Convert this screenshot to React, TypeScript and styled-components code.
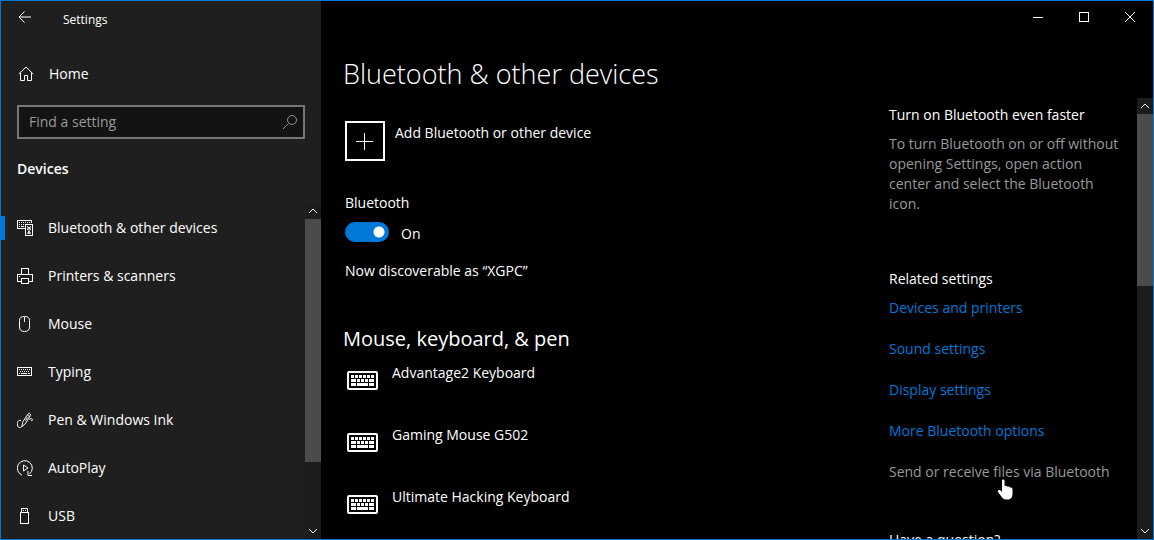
import React from 'react';
import styled, { createGlobalStyle } from 'styled-components';

const accent = '#0078d7';

const GlobalStyle = createGlobalStyle`
  *, *::before, *::after { box-sizing: border-box; }
  body {
    margin: 0;
    background: #000;
    color: #fff;
    font-family: "Open Sans", "Noto Sans", sans-serif;
    font-size: 14px;
    line-height: 20px;
  }
  button, input { font: inherit; color: inherit; }
  h1, h2, h3, p, ul { margin: 0; padding: 0; font: inherit; }
  ul { list-style: none; }
  svg { display: block; flex: none; }
`;

const Window = styled.div`
  display: flex;
  height: 100vh;
  border: 1px solid ${accent};
  overflow: hidden;
`;

const Sidebar = styled.aside`
  display: flex;
  flex-direction: column;
  flex: 0 0 320px;
  background: #1f1f1f;
`;

const PlainButton = styled.button`
  display: flex;
  align-items: center;
  justify-content: center;
  padding: 0;
  border: 0;
  background: transparent;
`;

const SidebarTop = styled.header`
  display: flex;
  align-items: center;
  height: 38px;
  font-size: 12px;
`;

const BackButton = styled(PlainButton)`
  width: 48px;
  height: 32px;
  align-self: flex-start;
  margin-right: 14px;
`;

const HomeLink = styled.a`
  display: flex;
  align-items: center;
  gap: 15px;
  height: 40px;
  margin-top: 15px;
  padding-left: 17px;
  color: inherit;
  text-decoration: none;
`;

const SearchBox = styled.label`
  display: flex;
  align-items: center;
  height: 34px;
  margin: 11px 16px 0;
  padding: 0 5px 0 10px;
  border: 2px solid #767676;
  background: #131313;
  color: #8f8f8f;
`;

const SearchInput = styled.input`
  flex: 1;
  min-width: 0;
  padding: 0;
  border: 0;
  outline: 0;
  background: transparent;
  &::placeholder { color: #999; opacity: 1; }
`;

const Category = styled.h2`
  margin: 20px 16px 24px;
  font-weight: 600;
`;

const Pane = styled.div`
  display: flex;
  flex: 1;
  min-height: 0;
`;

const NavList = styled.ul`
  flex: 1;
  padding-top: 1px;
  overflow: hidden;
`;

const NavLink = styled.a<{ $active?: boolean }>`
  display: flex;
  align-items: center;
  gap: 15px;
  height: 48px;
  padding-left: 16px;
  color: inherit;
  text-decoration: none;
  background: ${p => (p.$active ? `linear-gradient(${accent}, ${accent}) 0 50% / 4px 24px no-repeat` : 'none')};
`;

const Bar = styled.div`
  display: flex;
  flex-direction: column;
  flex: 0 0 16px;
  background: #1c1c1c;
`;

const BarButton = styled(PlainButton)`
  width: 16px;
  height: 16px;
`;

const Track = styled.div`
  flex: 1;
`;

const Thumb = styled.div<{ $size: number }>`
  height: ${p => p.$size}%;
  background: #4b4b4b;
`;

const Main = styled.main`
  display: flex;
  flex-direction: column;
  flex: 1;
  min-width: 0;
`;

const Caption = styled.div`
  display: flex;
  justify-content: flex-end;
  height: 32px;
`;

const CaptionButton = styled(PlainButton)`
  width: 46px;
`;

const Title = styled.h1`
  margin: 23px 22px 6px;
  font-size: 27px;
  font-weight: 300;
  line-height: 36px;
`;

const Content = styled.div`
  display: flex;
  flex: 1;
  justify-content: space-between;
  overflow: hidden;
  padding: 0 12px 0 24px;
`;

const Devices = styled.section`
  flex: 1;
  padding-top: 23px;
`;

const AddButton = styled.button`
  display: flex;
  align-items: flex-start;
  gap: 10px;
  padding: 0;
  border: 0;
  background: transparent;
`;

const AddSquare = styled.span`
  display: grid;
  place-items: center;
  width: 40px;
  height: 40px;
  border: 2px solid #fff;
`;

const AddLabel = styled.span`
  line-height: 24px;
`;

const SwitchLabel = styled.label`
  display: block;
  margin-top: 32px;
`;

const SwitchRow = styled.div`
  display: flex;
  align-items: flex-start;
  gap: 12px;
  margin-top: 9px;
`;

const Switch = styled.input`
  appearance: none;
  width: 44px;
  height: 20px;
  margin: 0;
  border-radius: 10px;
  background: radial-gradient(circle at 34px 10px, #fff 5px, transparent 6px) ${accent};
`;

const SwitchState = styled.span`
  line-height: 24px;
`;

const Discoverable = styled.p`
  margin-top: 15px;
`;

const GroupTitle = styled.h2`
  margin: 44px 0 10px -2px;
  font-size: 20px;
  line-height: 28px;
`;

const DeviceRow = styled.li`
  display: flex;
  align-items: flex-start;
  gap: 14px;
  height: 62px;
  padding-left: 2px;
  > svg { margin-top: 8px; }
`;

const Aside = styled.aside`
  flex: 0 0 236px;
  padding-top: 7px;
`;

const AsideTitle = styled.h3`
  margin-bottom: 9px;
`;

const Tip = styled.p`
  margin-bottom: 55px;
  color: #999;
`;

const LinkList = styled.ul`
  display: grid;
  gap: 21px;
  margin-bottom: 48px;
`;

const SettingLink = styled.a<{ $hovered?: boolean }>`
  position: relative;
  display: block;
  color: ${p => (p.$hovered ? '#999' : accent)};
  text-decoration: none;
  white-space: nowrap;
`;

const Pointer = styled.svg`
  position: absolute;
  left: 108px;
  top: 17px;
`;

const Line: React.FC<{ d: string; w?: number; h?: number; crisp?: boolean; children?: React.ReactNode }> = ({
  d, w = 16, h = 16, crisp, children,
}) => (
  <svg width={w} height={h} viewBox={`0 0 ${w} ${h}`} fill="none" stroke="currentColor"
    shapeRendering={crisp ? 'crispEdges' : 'auto'} aria-hidden="true">
    <path d={d} />
    {children}
  </svg>
);

const BluetoothIcon = () => (
  <Line crisp d="M8 8.500H.5v-8h14V3M2 2.500h1m1 0h1m1 0h1m1 0h1m1 0h1m1 0h1M2 4.500h1m1 0h1m1 0h1M2 6.500h1m1 0h3">
    <path d="M8.500 4.500h7v11h-7z" />
    <path d="M10 6h1v1h-1zM13 6h1v1h-1zM11 7h2v2h-2zM10 9h1v1h-1zM13 9h1v1h-1zM11 11h2v3h-2z" fill="#ddd" stroke="none" />
    <path d="M10 7h1v2h-1zM13 7h1v2h-1zM11 9h2v2h-2zM10 12h1v2h-1zM13 12h1v2h-1z" fill="#8a8a8a" stroke="none" />
  </Line>
);
const PrinterIcon = () => (
  <Line crisp d="M4.500 6V.5h7V6M4 13.500H.5v-7h15v7H12M4.500 10.500h7v5h-7zM2 8.500h1" />
);
const MouseIcon = () => (
  <Line d="M7.500 .5C4 .5 2.500 1.800 2.500 4.500v6.500c0 3 1.800 4.500 5 4.500s5-1.500 5-4.500V4.500C12.500 1.800 11 .5 7.500 .5zM7.500 1v5" />
);
const TypingIcon = () => (
  <Line crisp d="M.5 3.500h14v8H.5zM2 5.500h1m1 0h1m1 0h1m1 0h1m1 0h1m1 0h1M3 7.500h1m1 0h1m1 0h1m1 0h1m1 0h1M2 9.500h1m1 0h6m1 0h2" />
);
const PenIcon = () => (
  <Line d="M5 13.500 6 9.500l5-7.500c.8-1.300 2.700-.8 2.500 1L8.500 11.500 5 14.500v-1zM10.500 3.200l2.200 1.500M8.500 8.500l2-3M4 8.500H2.500C1.200 8.500.5 9.800.5 11.500v1.500c0 1.600.9 2.500 2.300 2.500 1.100 0 1.700-.5 2.200-1.500M12 7.500c1.200-1 2.800-1.100 3.400-.2.5.9-.5 1.700-1.400 1.200" />
);
const AutoPlayIcon = () => (
  <Line d="M5 15.100A7.500 7.500 0 1 1 12.500 14M11 11v4.500h4M6.500 5v6l4.500-3z" />
);
const UsbIcon = () => (
  <Line crisp d="M4.500 4V.5h6V4M3.500 4.500h8v11h-8zM6 2.500h1m1 0h1" />
);
const HomeIcon = () => <Line d="M.8 8 8 1l7.200 7M2.500 6.800v7.700h4v-5h3v5h4V6.800" />;

const KeyboardIcon = () => (
  <svg width="31" height="19" viewBox="0 0 31 19" aria-hidden="true">
    <rect x="1" y="1" width="29" height="17" rx="1" fill="none" stroke="#fff" strokeWidth="2" />
    <path fill="#fff" shapeRendering="crispEdges" d="M4 4h3v3H4zM8 4h3v3H8zM12 4h3v3h-3zM16 4h3v3h-3zM20 4h3v3h-3zM24 4h3v3h-3zM4 8h5v3H4zM10 8h3v3h-3zM14 8h3v3h-3zM18 8h3v3h-3zM22 8h5v3h-5zM4 12h5v3H4zM10 12h11v3H10zM22 12h5v3h-5z" />
  </svg>
);

const Scrollbar: React.FC<{ size: number }> = ({ size }) => (
  <Bar>
    <BarButton aria-label="Scroll up"><Line w={10} h={6} d="M1 5l4-4 4 4" /></BarButton>
    <Track><Thumb $size={size} /></Track>
    <BarButton aria-label="Scroll down"><Line w={10} h={6} d="M1 1l4 4 4-4" /></BarButton>
  </Bar>
);

const navItems: [string, React.FC][] = [
  ['Bluetooth & other devices', BluetoothIcon],
  ['Printers & scanners', PrinterIcon],
  ['Mouse', MouseIcon],
  ['Typing', TypingIcon],
  ['Pen & Windows Ink', PenIcon],
  ['AutoPlay', AutoPlayIcon],
  ['USB', UsbIcon],
];

const deviceNames = ['Advantage2 Keyboard', 'Gaming Mouse G502', 'Ultimate Hacking Keyboard'];
const relatedLinks = ['Devices and printers', 'Sound settings', 'Display settings', 'More Bluetooth options'];

export default function App() {
  return (
    <>
      <GlobalStyle />
      <Window>
        <Sidebar>
          <SidebarTop>
            <BackButton aria-label="Back"><Line w={14} h={12} d="M13 6H1M6.500 .5 1 6l5.500 5.500" /></BackButton>
            Settings
          </SidebarTop>
          <HomeLink href="#home"><HomeIcon />Home</HomeLink>
          <SearchBox>
            <SearchInput type="search" placeholder="Find a setting" aria-label="Find a setting" />
            <Line d="M1 15l5.500-5.500"><circle cx="10" cy="6" r="4.500" /></Line>
          </SearchBox>
          <Category>Devices</Category>
          <Pane>
            <NavList>
              {navItems.map(([label, Icon], i) => (
                <li key={label}>
                  <NavLink href="#page" $active={i === 0} aria-current={i === 0 ? 'page' : undefined}>
                    <Icon />{label}
                  </NavLink>
                </li>
              ))}
            </NavList>
            <Scrollbar size={80} />
          </Pane>
        </Sidebar>
        <Main>
          <Caption>
            <CaptionButton aria-label="Minimize"><Line crisp w={10} h={10} d="M0 5.500h10" /></CaptionButton>
            <CaptionButton aria-label="Maximize"><Line crisp w={10} h={10} d="M.5 .5h9v9h-9z" /></CaptionButton>
            <CaptionButton aria-label="Close"><Line w={10} h={10} d="M0 0l10 10M10 0 0 10" /></CaptionButton>
          </Caption>
          <Title>Bluetooth &amp; other devices</Title>
          <Pane>
            <Content>
              <Devices>
                <AddButton>
                  <AddSquare><Line crisp w={18} h={18} d="M0 9.500h17M8.500 1v17" /></AddSquare>
                  <AddLabel>Add Bluetooth or other device</AddLabel>
                </AddButton>
                <SwitchLabel htmlFor="bluetooth">Bluetooth</SwitchLabel>
                <SwitchRow>
                  <Switch id="bluetooth" type="checkbox" role="switch" defaultChecked />
                  <SwitchState>On</SwitchState>
                </SwitchRow>
                <Discoverable>Now discoverable as “XGPC”</Discoverable>
                <GroupTitle>Mouse, keyboard, &amp; pen</GroupTitle>
                <ul>
                  {deviceNames.map(name => (
                    <DeviceRow key={name}><KeyboardIcon />{name}</DeviceRow>
                  ))}
                </ul>
              </Devices>
              <Aside>
                <AsideTitle>Turn on Bluetooth even faster</AsideTitle>
                <Tip>
                  To turn Bluetooth on or off without opening Settings, open action center and select the
                  Bluetooth icon.
                </Tip>
                <AsideTitle>Related settings</AsideTitle>
                <LinkList>
                  {relatedLinks.map(label => (
                    <li key={label}><SettingLink href="#related">{label}</SettingLink></li>
                  ))}
                  <li>
                    <SettingLink href="#files" $hovered>
                      Send or receive files via Bluetooth
                      <Pointer width="17" height="22" viewBox="0 0 17 22" aria-hidden="true">
                        <path fill="#fff" d="M5 1.500C5 .2 7.500.2 7.500 1.500V7l1-.3c1-.2 1.600.2 1.700 1l1.300-.1c.8 0 1.200.4 1.300 1.100 1.500-.3 2.700.3 2.700 1.600V15c0 3-1.700 5.500-4.500 5.500H9c-2 0-3.300-1-4.200-2.500L1 13c-.9-1.500 1-2.800 2.300-1.700L5 13z" />
                      </Pointer>
                    </SettingLink>
                  </li>
                </LinkList>
                <AsideTitle>Have a question?</AsideTitle>
              </Aside>
            </Content>
            <Scrollbar size={42} />
          </Pane>
        </Main>
      </Window>
    </>
  );
}
